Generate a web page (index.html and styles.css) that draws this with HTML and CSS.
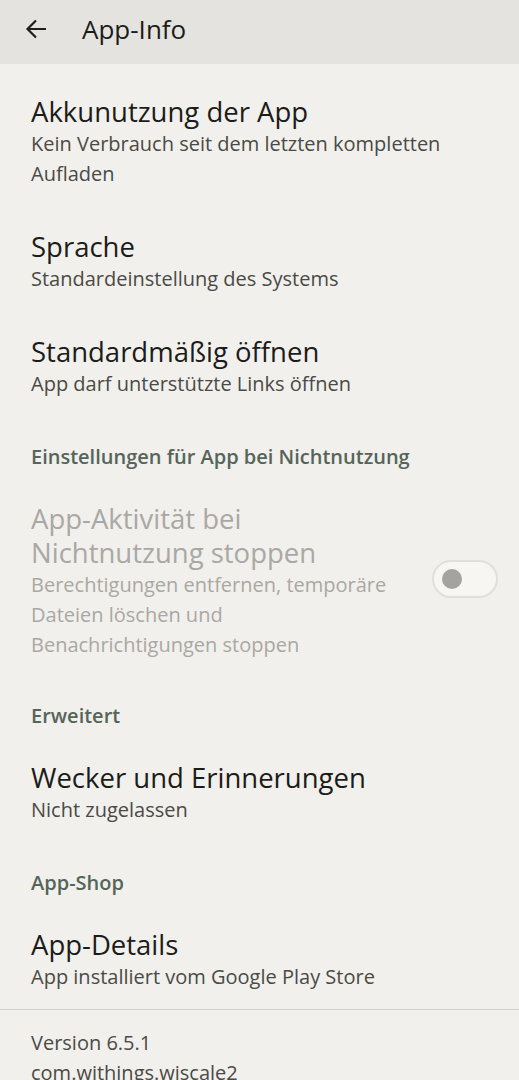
FILE: index.html
```html
<!DOCTYPE html>
<html lang="de">
<head>
    <meta charset="UTF-8">
    <meta name="viewport" content="width=device-width, initial-scale=1.0">
    <title>App-Info</title>
    <link rel="stylesheet" href="styles.css">
</head>
<body>
    <div class="topbar">
        <svg class="back" width="24" height="24" viewBox="0 0 24 24">
            <path d="M22 12H3.5M12 3.5L3.5 12L12 20.5" fill="none" stroke="#1f1f1d" stroke-width="2.2"/>
        </svg>
        <span class="topbar-title">App-Info</span>
    </div>

    <div class="list">
        <div class="item">
            <div class="item-title">Akkunutzung der App</div>
            <div class="item-sub">Kein Verbrauch seit dem letzten kompletten Aufladen</div>
        </div>
        <div class="item">
            <div class="item-title">Sprache</div>
            <div class="item-sub">Standardeinstellung des Systems</div>
        </div>
        <div class="item">
            <div class="item-title">Standardmäßig öffnen</div>
            <div class="item-sub">App darf unterstützte Links öffnen</div>
        </div>

        <div class="section">Einstellungen für App bei Nichtnutzung</div>
        <div class="item item-switch disabled">
            <div class="item-text">
                <div class="item-title">App-Aktivität bei Nichtnutzung stoppen</div>
                <div class="item-sub">Berechtigungen entfernen, temporäre Dateien löschen und Benachrichtigungen stoppen</div>
            </div>
            <div class="switch"><div class="knob"></div></div>
        </div>

        <div class="section">Erweitert</div>
        <div class="item">
            <div class="item-title">Wecker und Erinnerungen</div>
            <div class="item-sub">Nicht zugelassen</div>
        </div>

        <div class="section">App-Shop</div>
        <div class="item last">
            <div class="item-title">App-Details</div>
            <div class="item-sub">App installiert vom Google Play Store</div>
        </div>

        <div class="footer">
            <div>Version 6.5.1</div>
            <div>com.withings.wiscale2</div>
        </div>
    </div>
</body>
</html>
```

FILE: styles.css
```css
body {
    margin: 0;
    font-family: 'Open Sans', 'Noto Sans', sans-serif;
    background-color: #f1f0ec;
    color: #1c1c1a;
    height: 1080px;
    overflow: hidden;
}
.topbar {
    height: 64px;
    background: #e4e3df;
    display: flex;
    align-items: center;
    padding-left: 24px;
}
.back {
    margin-top: -6px;
}
.topbar-title {
    margin-left: 34px;
    margin-top: -6px;
    font-size: 26px;
}
.list {
    padding-top: 11px;
}
.item {
    padding: 20px 31px 21px;
}
.item-title {
    font-size: 27.5px;
    line-height: 34px;
}
.item-sub {
    font-size: 20px;
    line-height: 30px;
    color: #4a4a47;
}
.item-switch {
    display: flex;
    align-items: center;
    gap: 24px;
    padding-right: 21px;
    padding-bottom: 19px;
}
.item-text {
    flex: 1;
}
.disabled .item-title,
.disabled .item-sub {
    color: #a9a8a5;
}
.switch {
    height: 34px;
    width: 54px;
    padding-left: 8px;
    margin-bottom: 4px;
    border: 2px solid #e0dfdb;
    border-radius: 20px;
    background: #f7f6f3;
    display: flex;
    align-items: center;
}
.knob {
    width: 20px;
    height: 20px;
    border-radius: 50%;
    background: #a4a3a0;
}
.section {
    padding: 25px 31px 13px;
    font-size: 20px;
    line-height: 24px;
    font-weight: 600;
    color: #56655a;
}
.item.last {
    padding-bottom: 17px;
    border-bottom: 1px solid #d3d2ce;
}
.footer {
    padding: 18px 31px;
    font-size: 20px;
    line-height: 30px;
    color: #4a4a47;
}
```
